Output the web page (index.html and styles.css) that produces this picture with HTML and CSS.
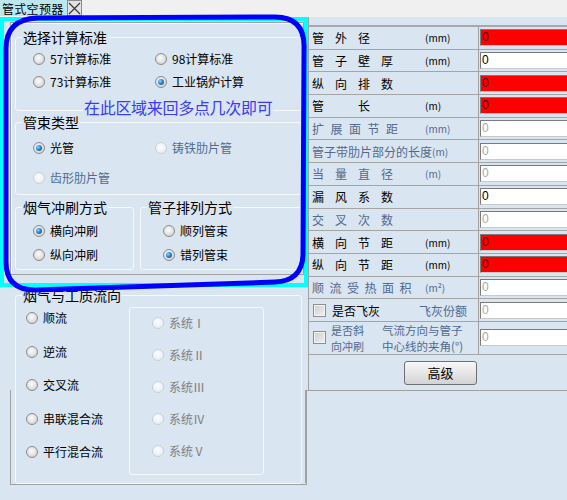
FILE: index.html
```html
<!DOCTYPE html>
<html lang="zh-CN">
<head>
<meta charset="utf-8">
<title>管式空预器</title>
<link rel="stylesheet" href="styles.css">
</head>
<body>
<div class="tabbar">
  <div class="tab">管式空预器</div>
  <div class="tab-close"><svg width="13" height="13" viewBox="0 0 13 13"><path d="M1 1L12 12M12 1L1 12" stroke="#333" stroke-width="1.1" fill="none"/></svg></div>
</div>
<div class="main">
  <div class="left">
    <div class="hl">
      <div class="panel">
        <fieldset class="gb gb-std">
          <legend>选择计算标准</legend>
          <div class="opts std-opts">
            <label class="opt"><span class="rb"></span>57计算标准</label>
            <label class="opt"><span class="rb"></span>98计算标准</label>
            <label class="opt"><span class="rb"></span>73计算标准</label>
            <label class="opt"><span class="rb on"></span>工业锅炉计算</label>
          </div>
        </fieldset>
        <div class="hint">在此区域来回多点几次即可</div>
        <fieldset class="gb gb-type">
          <legend>管束类型</legend>
          <div class="opts type-opts">
            <label class="opt"><span class="rb on"></span>光管</label>
            <label class="opt dis"><span class="rb dis"></span>铸铁肋片管</label>
            <label class="opt dis"><span class="rb dis"></span>齿形肋片管</label>
          </div>
        </fieldset>
        <div class="pair">
          <fieldset class="gb gb-wash">
            <legend>烟气冲刷方式</legend>
            <div class="col">
              <label class="opt"><span class="rb on"></span>横向冲刷</label>
              <label class="opt"><span class="rb"></span>纵向冲刷</label>
            </div>
          </fieldset>
          <fieldset class="gb gb-arr">
            <legend>管子排列方式</legend>
            <div class="col">
              <label class="opt"><span class="rb"></span>顺列管束</label>
              <label class="opt"><span class="rb on"></span>错列管束</label>
            </div>
          </fieldset>
        </div>
      </div>
    </div>
    <div class="lower">
      <fieldset class="gb gb-flow">
        <legend>烟气与工质流向</legend>
        <div class="flow">
          <div class="flow-list">
            <label class="opt"><span class="rb"></span>顺流</label>
            <label class="opt"><span class="rb"></span>逆流</label>
            <label class="opt"><span class="rb"></span>交叉流</label>
            <label class="opt"><span class="rb"></span>串联混合流</label>
            <label class="opt"><span class="rb"></span>平行混合流</label>
          </div>
          <div class="sys-box">
            <label class="opt gray"><span class="rb dis"></span>系统Ⅰ</label>
            <label class="opt gray"><span class="rb dis"></span>系统Ⅱ</label>
            <label class="opt gray"><span class="rb dis"></span>系统Ⅲ</label>
            <label class="opt gray"><span class="rb dis"></span>系统Ⅳ</label>
            <label class="opt gray"><span class="rb dis"></span>系统Ⅴ</label>
          </div>
        </div>
      </fieldset>
    </div>
  </div>
  <div class="right">
    <div class="rp-top">
      <div class="rp-head"></div>
      <div class="row"><div class="lab"><span class="t sp23">管外径</span><span class="u">(mm)</span></div><div class="val"><span class="inp red">0</span></div></div>
      <div class="row"><div class="lab"><span class="t sp23">管子壁厚</span><span class="u">(mm)</span></div><div class="val"><span class="inp">0</span></div></div>
      <div class="row"><div class="lab"><span class="t sp23">纵向排数</span></div><div class="val"><span class="inp red">0</span></div></div>
      <div class="row"><div class="lab"><span class="t sp23">管　长</span><span class="u">(m)</span></div><div class="val"><span class="inp red">0</span></div></div>
      <div class="row"><div class="lab dis"><span class="t sp18">扩展面节距</span><span class="u">(mm)</span></div><div class="val"><span class="inp dis">0</span></div></div>
      <div class="row"><div class="lab dis"><span>管子带肋片部分的长度</span><span class="u">(m)</span></div><div class="val"><span class="inp dis">0</span></div></div>
      <div class="row"><div class="lab dis"><span class="t sp23">当量直径</span><span class="u">(m)</span></div><div class="val"><span class="inp dis">0</span></div></div>
      <div class="row"><div class="lab"><span class="t sp23">漏风系数</span></div><div class="val"><span class="inp">0</span></div></div>
      <div class="row"><div class="lab dis"><span class="t sp23">交叉次数</span></div><div class="val"><span class="inp dis">0</span></div></div>
      <div class="row"><div class="lab"><span class="t sp23">横向节距</span><span class="u">(mm)</span></div><div class="val"><span class="inp red">0</span></div></div>
      <div class="row"><div class="lab"><span class="t sp23">纵向节距</span><span class="u">(mm)</span></div><div class="val"><span class="inp red">0</span></div></div>
      <div class="row"><div class="lab dis"><span class="t sp17">顺流受热面积</span><span class="u">(m²)</span></div><div class="val"><span class="inp dis">0</span></div></div>
      <div class="row"><div class="lab"><span class="cb"></span><span class="ash">是否飞灰</span><span class="note dis">飞灰份额</span></div><div class="val"><span class="inp dis">0</span></div></div>
      <div class="row tall"><div class="lab"><span class="cb"></span><span class="two dis">是否斜<br>向冲刷</span><span class="two note2 dis">气流方向与管子<br>中心线的夹角(°)</span></div><div class="val"><span class="inp dis">0</span></div></div>
      <div class="btn-row"><button class="btn">高级</button></div>
    </div>
    <div class="rp-foot"></div>
  </div>
</div>
<svg class="annot" width="312" height="296" viewBox="0 0 312 296"><path d="M37 18 L275 17 Q304 17 304 46 L303 255 Q302 281 275 282 L35 290 Q6 290 6 262 L6 49 Q6 19 37 18 Z" fill="none" stroke="#0000ff" stroke-width="5"/></svg>
</body>
</html>
```
FILE: styles.css
```css
* { box-sizing: border-box; }
html, body { margin: 0; padding: 0; width: 567px; height: 500px; overflow: hidden; }
body {
  position: relative;
  background: #d9e5f1;
  font-family: "Noto Sans CJK SC", "Noto Sans", sans-serif;
  font-size: 12px;
  color: #000;
}

.tabbar { height: 17px; background: #f0f0f0; display: flex; }
.tab {
  width: 67px; height: 16px; background: #bde7ef;
  font-size: 12px; line-height: 17px; padding-left: 2px;
  white-space: nowrap; letter-spacing: 0.3px;
}
.tab-close {
  width: 15px; height: 16px; border: 1px solid #8a8a8a; background: #e2e2e2;
  display: flex; align-items: center; justify-content: center;
}

.main { display: flex; height: 483px; }
.left { width: 308px; flex: none; }

.hl { height: 270px; border: 4px solid #00ffff; padding: 1px 0 8px 6px; }
.panel {
  position: relative; height: 253px;
  border: 1px solid #a0a0a0;
  box-shadow: inset 1px 1px 0 #f4f7fa;
  padding: 0 0 0 4px;
}

.gb {
  margin: 0; padding: 0; min-width: 0;
  border: 1px solid #f6f9fc; border-radius: 3px;
}
.gb legend { margin-left: 6px; padding: 0 1px; font-size: 14px; line-height: 16px; }

.opt {
  display: flex; align-items: center; gap: 5px;
  height: 16px; line-height: 16px; font-size: 12px; white-space: nowrap;
}
.opt.dis { color: #4f6a90; }
.opt.gray { color: #808080; }

.rb {
  position: relative; flex: none;
  width: 12px; height: 12px; border-radius: 50%;
  border: 1px solid #8c8c8c;
  background: radial-gradient(circle at 45% 40%, #fbfbfb 0%, #e6e6e6 45%, #c4c4c4 100%);
}
.rb.on::after {
  content: ""; position: absolute; left: 2px; top: 2px; width: 6px; height: 6px; border-radius: 50%;
  background: radial-gradient(circle at 35% 35%, #8fd6ff 0%, #2b87cf 45%, #0c4277 100%);
}
.rb.dis { border-color: #c8d0da; background: radial-gradient(circle at 45% 40%, #fbfcfd 0%, #eef2f6 60%, #dfe5ec 100%); }

.gb-std { margin-top: 6px; width: 287px; }
.std-opts { display: grid; grid-template-columns: 122px auto; row-gap: 7px; padding: 6px 0 20px 17px; }

.hint {
  position: absolute; left: 72px; top: 75px;
  font-size: 16px; line-height: 18px; color: #3c3cf5;
  background: #d9e5f1; padding: 0 1px; letter-spacing: -0.3px; white-space: nowrap;
}

.gb-type { margin-top: 3px; width: 287px; }
.type-opts { display: grid; grid-template-columns: 122px auto; row-gap: 14px; padding: 10px 0 8px 17px; }

.pair { display: flex; gap: 6px; margin-top: 4px; }
.gb-wash { width: 119px; }
.gb-arr { width: 162px; }
.col { display: flex; flex-direction: column; gap: 8px; padding: 8px 0 6px 17px; }
.gb-arr .col { padding-left: 22px; }

.lower { position: relative; height: 213px; }
.lower::before {
  content: ""; position: absolute; left: 10px; top: 103px; width: 295px; height: 94px;
  border: 1px solid #a0a0a0; border-top: none;
}
.gb-flow { position: relative; z-index: 1; margin-left: 15px; width: 287px; background: #d9e5f1; }
.flow { display: flex; height: 180px; }
.flow-list { width: 113px; flex: none; padding: 7px 0 0 10px; display: flex; flex-direction: column; gap: 17.5px; }
.sys-box {
  margin-top: 4px; width: 135px; height: 168px;
  border: 1px solid #f6f9fc; border-radius: 3px;
  padding: 7px 0 0 22px; display: flex; flex-direction: column; gap: 16px;
}

.right { flex: 1; min-width: 0; }
.rp-top { border-left: 1px solid #a0a0a0; }
.rp-head { height: 10px; border-bottom: 2px solid #a8a8a8; }
.row {
  display: grid; grid-template-columns: 170px 1fr;
  height: 22.7px; border-bottom: 1px solid #a5a5a5;
}
.row.tall { height: 33px; }
.lab {
  border-right: 1px solid #a0a0a0; padding-left: 3px;
  display: flex; align-items: center; white-space: nowrap; font-size: 12px; color: #000;
}
.lab.dis, .dis { color: #51698d; }
.t { display: inline-block; min-width: 113px; }
.sp23 { letter-spacing: 11px; }
.sp18 { letter-spacing: 6.5px; }
.sp17 { letter-spacing: 5.5px; }
.u { font-size: 10px; }
.val { display: flex; align-items: center; padding-left: 1px; overflow: hidden; }
.inp {
  flex: none; width: 100px; height: 17px; background: #fff;
  border: 1px solid; border-color: #7b7b7b #c9c9c9 #c9c9c9 #7b7b7b;
  font: 12px/15px "Liberation Sans", sans-serif; padding-left: 1px; color: #000;
}
.inp.red { background: #ff0000; color: #300; }
.inp.dis { color: #a8a8a8; }

.cb {
  flex: none; width: 13px; height: 13px; margin-left: 1px;
  border: 1px solid #8e8e8e;
  background: linear-gradient(135deg, #cdcdcd, #f2f2f2);
  box-shadow: inset 0 0 0 1px #f4f4f4;
}
.ash { margin-left: 6px; }
.note { margin-left: auto; padding-right: 11px; }
.two { display: block; line-height: 16px; font-size: 11px; }
.two.dis { margin-left: 5px; }
.two.note2 { margin-left: 18px; font-size: 11.5px; }

.btn-row { display: flex; justify-content: center; padding: 6px 0 5px 5px; }
.btn {
  width: 73px; height: 24px; padding: 0;
  border: 1px solid #707070; border-radius: 3px;
  background: linear-gradient(#f7f7f7, #e6e6e6 50%, #d3d3d3);
  font-family: "Noto Sans CJK SC", sans-serif; font-size: 13px; color: #000;
}
.rp-foot { margin-left: -3px; height: 93px; border-top: 1px solid #a0a0a0; border-left: 1px solid #a0a0a0; }

.annot { position: absolute; left: 0; top: 0; pointer-events: none; z-index: 5; }
```
